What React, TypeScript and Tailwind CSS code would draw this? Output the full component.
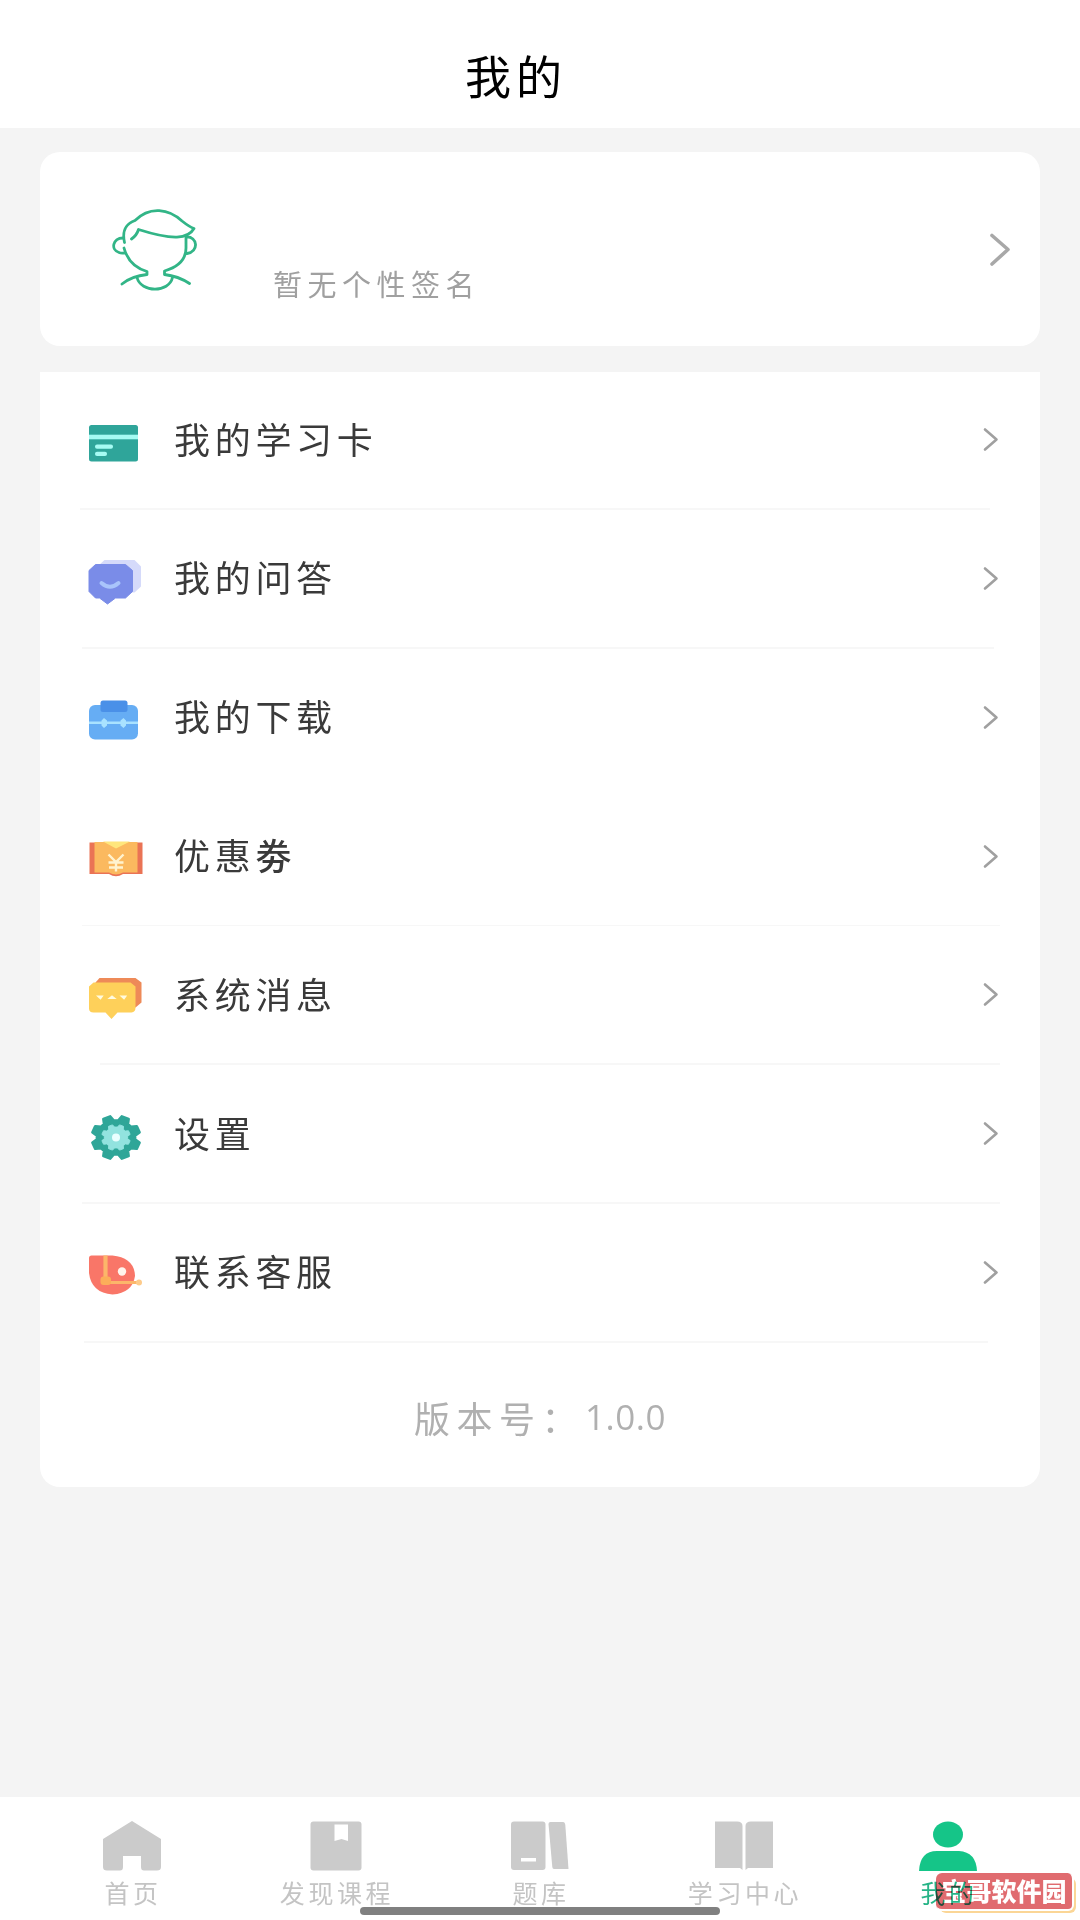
import React from 'react';

const CardIcon = () => (
  <svg width="54" height="50" viewBox="0 0 54 50">
    <rect x="1" y="8" width="49" height="36.500" rx="2.500" fill="#2fa59a" />
    <rect x="1" y="17.700" width="49" height="4.600" fill="#a6fbf3" />
    <rect x="7" y="27.500" width="18" height="4.200" rx="2" fill="#a6fbf3" />
    <rect x="7" y="34.700" width="12" height="4.200" rx="2" fill="#a6fbf3" />
  </svg>
);

const AnswerIcon = () => (
  <svg width="54" height="50" viewBox="0 0 54 50" className="overflow-visible">
    <g transform="translate(-0.5 2.5)">
      <path d="M17 2.500H47L53.500 9V29L47 35H17L10 28V9Z" fill="#d5dafa" />
      <path d="M8 7H38L45 13V34L38 40.500H28L20 46.500L12 40.500H8L1.500 34V13Z" fill="#7a8ce8" stroke="#7a8ce8" strokeLinejoin="round" />
      <path d="M14 25.500Q22.500 33 31 25.500" stroke="#a9c4fb" strokeWidth="4" fill="none" strokeLinecap="round" />
    </g>
  </svg>
);

const DownloadIcon = () => (
  <svg width="54" height="50" viewBox="0 0 54 50">
    <rect x="1" y="11" width="49" height="34.500" rx="6" fill="#66adf4" />
    <rect x="12.500" y="6.500" width="27" height="11.500" rx="2.500" fill="#4a90e8" />
    <path d="M1 28.800H50" stroke="#a9e2ff" strokeWidth="2.400" />
    <path d="M16 24L19 26.500V31.500L16 34L13.500 31.500V26.500ZM35.500 24L38 26.500V31.500L35.500 34L32.500 31.500V26.500Z" fill="#a9e2ff" />
  </svg>
);

const CouponIcon = () => (
  <svg width="54" height="50" viewBox="0 0 54 50" className="overflow-visible">
    <g transform="translate(0 1)">
      <path d="M1.500 8.500H54.500V40H35Q28 44.500 21 40H1.500Z" fill="#ea7355" />
      <path d="M6.500 8H49.500V38.500H35Q28 42.500 21 38.500H6.500Z" fill="#fbb95f" />
      <path d="M15 7.500H42L28 14.500Z" fill="#ffe67c" />
      <path d="M20.500 20.500L28 28L35.500 20.500M20.500 28.500H35.500M21 33.500H35M28 28V37.500" stroke="#fff3cf" strokeWidth="2.400" fill="none" />
    </g>
  </svg>
);

const MessageIcon = () => (
  <svg width="54" height="50" viewBox="0 0 54 50" className="overflow-visible">
    <g transform="translate(-0.5 2.5)">
      <path d="M12 3.500H48L54 8V28L48 33H8V8Z" fill="#ee8a58" />
      <path d="M6 8H43L48 12V33Q48 37.500 44 38H30L24 44.500L18 38H6Q1.500 38 1.500 34V12Z" fill="#fed05a" />
      <path d="M10 21.500h5l-2 2.800zM21.500 24l3-2.500 3 2.500zM33.500 21.500h5l-2 2.800z" fill="#fffbe0" stroke="#fffbe0" strokeWidth="1.200" />
    </g>
  </svg>
);

const gearPath = (r1: number, r2: number) => {
  const pts: string[] = [];
  for (let i = 0; i < 8; i++) {
    const a = (i * Math.PI) / 4 + Math.PI / 8;
    const offs: [number, number][] = [[-0.27, r1], [-0.15, r2], [0.15, r2], [0.27, r1]];
    for (const [o, r] of offs) {
      pts.push((28 + Math.cos(a + o) * r * 1.12).toFixed(2) + ' ' + (26.5 + Math.sin(a + o) * r).toFixed(2));
    }
  }
  return 'M' + pts.join('L') + 'Z';
};

const GearIcon = () => (
  <svg width="54" height="50" viewBox="0 0 54 50" className="overflow-visible">
    <path d={gearPath(17, 21.500)} fill="#2fa698" stroke="#2fa698" strokeWidth="3" strokeLinejoin="round" />
    <path d={gearPath(10.500, 13)} fill="#92e3df" stroke="#92e3df" strokeWidth="1" strokeLinejoin="round" />
    <circle cx="28" cy="26.500" r="4" fill="#eaffff" />
  </svg>
);

const ServiceIcon = () => (
  <svg width="54" height="50" viewBox="0 0 54 50" className="overflow-visible">
    <g transform="translate(-0.5 1)">
      <path d="M4 5.500H25Q47 8 47.500 26Q45 43 25 44.500Q4 43 1.500 23V8Q1.500 5.500 4 5.500Z" fill="#f97668" />
      <path d="M18 5.500V30" stroke="#fcb66a" strokeWidth="4.200" />
      <path d="M14 32.500H53" stroke="#fcb66a" strokeWidth="3.200" />
      <rect x="13" y="26.500" width="10.500" height="8.500" rx="3" fill="#fcae5a" />
      <circle cx="51.500" cy="32.500" r="3" fill="#fdcb8b" />
      <circle cx="34.500" cy="21.500" r="4.200" fill="#fff4ec" />
    </g>
  </svg>
);

const Chevron = () => (
  <svg width="18" height="26" viewBox="0 0 18 26" fill="none" stroke="#a0a0a0" strokeWidth="2.600" strokeLinecap="round" strokeLinejoin="round">
    <path d="M3 3.500L14.500 13.500L3 23.500" />
  </svg>
);

const Avatar = () => (
  <svg width="88" height="84" viewBox="0 0 88 84" fill="none" stroke="#32b587" strokeWidth="2.800" strokeLinecap="round" strokeLinejoin="round">
    <path d="M13.500 33.500C10.500 20 16 14.500 24 11.500C39 -3.500 58 0 71 12C76 16 79 18 83 19.500C77 30 62 31.500 27.500 20.500C26.500 24 24 27.500 20.500 30" />
    <path d="M12 29C1.500 29 -.500 41 8 43.500Q10 44.500 13.500 44M13 39C16 50 24 59 36 62.500V65.500C26 66.500 19 68.500 11 75" />
    <path d="M75 27V39C75 50 67 58 53.500 62V65.500C62 66.500 70 69 78.500 74.500M75 28C87 27 88 43 76 44.500" />
    <path d="M26 68.500C30 84 58 84 61.500 68.500" />
  </svg>
);

const items = [
  { label: '我的学习卡', Icon: CardIcon, line: 'ml-[40px] mr-[50px]' },
  { label: '我的问答', Icon: AnswerIcon, line: 'ml-[42px] mr-[46px]' },
  { label: '我的下载', Icon: DownloadIcon, line: 'invisible' },
  { label: '优惠', heavy: '劵', Icon: CouponIcon, line: 'ml-[42px] mr-[40px]' },
  { label: '系统消息', Icon: MessageIcon, line: 'ml-[60px] mr-[40px]' },
  { label: '设置', Icon: GearIcon, line: 'ml-[42px] mr-[40px]' },
  { label: '联系客服', Icon: ServiceIcon, line: 'ml-[44px] mr-[52px]' },
];

const HomeIcon = () => (
  <svg width="58" height="50" viewBox="0 0 58 50" fill="#cbcbcb">
    <path d="M29 0L58 18V46Q58 49.500 54 49.500H41Q38 49.500 38 46V35H20V46Q20 49.500 17 49.500H4Q0 49.500 0 46V18Z" />
  </svg>
);
const CourseIcon = () => (
  <svg width="52" height="50" viewBox="0 0 52 50">
    <rect x=".500" y=".500" width="51" height="49" rx="3" fill="#cbcbcb" />
    <path d="M24.500 3.500H38V20L31.500 18L24.500 20Z" fill="#fff" />
  </svg>
);
const BankIcon = () => (
  <svg width="58" height="50" viewBox="0 0 58 50" fill="#cbcbcb">
    <rect x="0" y=".500" width="34.500" height="48.500" rx="3" />
    <path d="M39.500 1H52Q54 1 54.300 4L57.500 48H43Q41.500 48 41.300 46L37.500 3Q37.500 1 39.500 1Z" />
    <rect x="10" y="37" width="15" height="3.500" fill="#fff" />
  </svg>
);
const StudyIcon = () => (
  <svg width="58" height="50" viewBox="0 0 58 50" fill="#cbcbcb">
    <path d="M0 .500H22Q27.500 .500 27.500 5V49L25 47H0ZM58 .500H36Q30.500 .500 30.500 5V49L33 47H58Z" />
  </svg>
);
const PersonIcon = () => (
  <svg width="58" height="50" viewBox="0 0 58 50" fill="#15c588">
    <ellipse cx="29" cy="13.500" rx="15" ry="13" />
    <path d="M0 50Q1 30 18 30H40Q57 31 58 50Z" />
  </svg>
);

const tabs = [
  { label: '首页', Icon: HomeIcon },
  { label: '发现课程', Icon: CourseIcon },
  { label: '题库', Icon: BankIcon },
  { label: '学习中心', Icon: StudyIcon },
  { label: '我的', Icon: PersonIcon, active: true },
];

export default function App() {
  return (
    <div className="relative flex h-[1920px] w-[1080px] flex-col overflow-hidden bg-[#f4f4f4] font-['KaiTi','Noto_Sans_CJK_SC',sans-serif]">
      <header className="flex h-[128px] shrink-0 bg-white pl-[465px] pt-[42px]">
        <h1 className="text-[46px] leading-[64px] tracking-[5px] text-black">我的</h1>
      </header>

      <section className="mx-[40px] mt-[24px] flex h-[194px] shrink-0 items-start rounded-[20px] bg-white">
        <div className="ml-[71px] mt-[57px]"><Avatar /></div>
        <p className="ml-[74px] mt-[111px] text-[29px] leading-[40px] tracking-[5.500px] text-[#a0a0a0]">暂无个性签名</p>
        <svg className="ml-auto mr-[27px] mt-[80px]" width="26" height="36" viewBox="0 0 26 36" fill="none" stroke="#a8a8a8" strokeWidth="3.600" strokeLinecap="round" strokeLinejoin="round">
          <path d="M5 3.500L21 17.500L5 32" />
        </svg>
      </section>

      <main className="mx-[40px] mt-[26px] h-[1115px] shrink-0 rounded-b-[20px] bg-white">
        {items.map(({ label, heavy, Icon, line }) => (
          <div key={label} className="flex h-[138.800px] flex-col">
            <div className="flex flex-1 items-center">
              <div className="ml-[48px] mt-[3px]"><Icon /></div>
              <span className="-mt-[5px] ml-[32px] text-[36px] leading-[52px] tracking-[4.700px] text-[#3a3a3a]">
                {label}
                {heavy && <span className="font-medium">{heavy}</span>}
              </span>
              <div className="-mt-[2px] ml-auto mr-[40px]"><Chevron /></div>
            </div>
            <div className={'mb-[1px] h-[1.500px] bg-[#f7f7f7] ' + line} />
          </div>
        ))}
        <p className="ml-[374px] mt-[47px] flex text-[36px] leading-[52px] text-[#b0b0b0]">
          <span className="w-[171px] tracking-[6.500px]">版本号：</span>
          <span className="font-['Open_Sans'] text-[35px] tracking-[.500px]">1.0.0</span>
        </p>
      </main>

      <nav className="mt-auto grid h-[123px] shrink-0 grid-cols-5 bg-white px-[30px] pt-[24px]">
        {tabs.map(({ label, Icon, active }) => (
          <div key={label} className="flex flex-col items-center">
            <Icon />
            <span className={'mt-[3px] pl-[2px] text-[25px] leading-[36px] tracking-[3.600px] ' + (active ? 'text-[#27b487]' : 'text-[#c4c4c4]')}>{label}</span>
          </div>
        ))}
      </nav>

      <div className="absolute left-[360px] top-[1907px] h-[8px] w-[360px] rounded-full bg-[#808080]" />
      <div className="absolute left-[936px] top-[1873px] mix-blend-multiply">
        <div className="absolute left-[4px] top-[5px] h-[35px] w-[136px] rounded-[6px] bg-[#fbd696]" />
        <div className="relative flex h-[38px] w-[138px] items-center justify-center rounded-[6px] border-b-2 border-r-2 border-white bg-[#e06b6f] pb-[2px] text-[25px] font-black leading-none text-white">
          宝哥软件园
        </div>
      </div>
    </div>
  );
}
